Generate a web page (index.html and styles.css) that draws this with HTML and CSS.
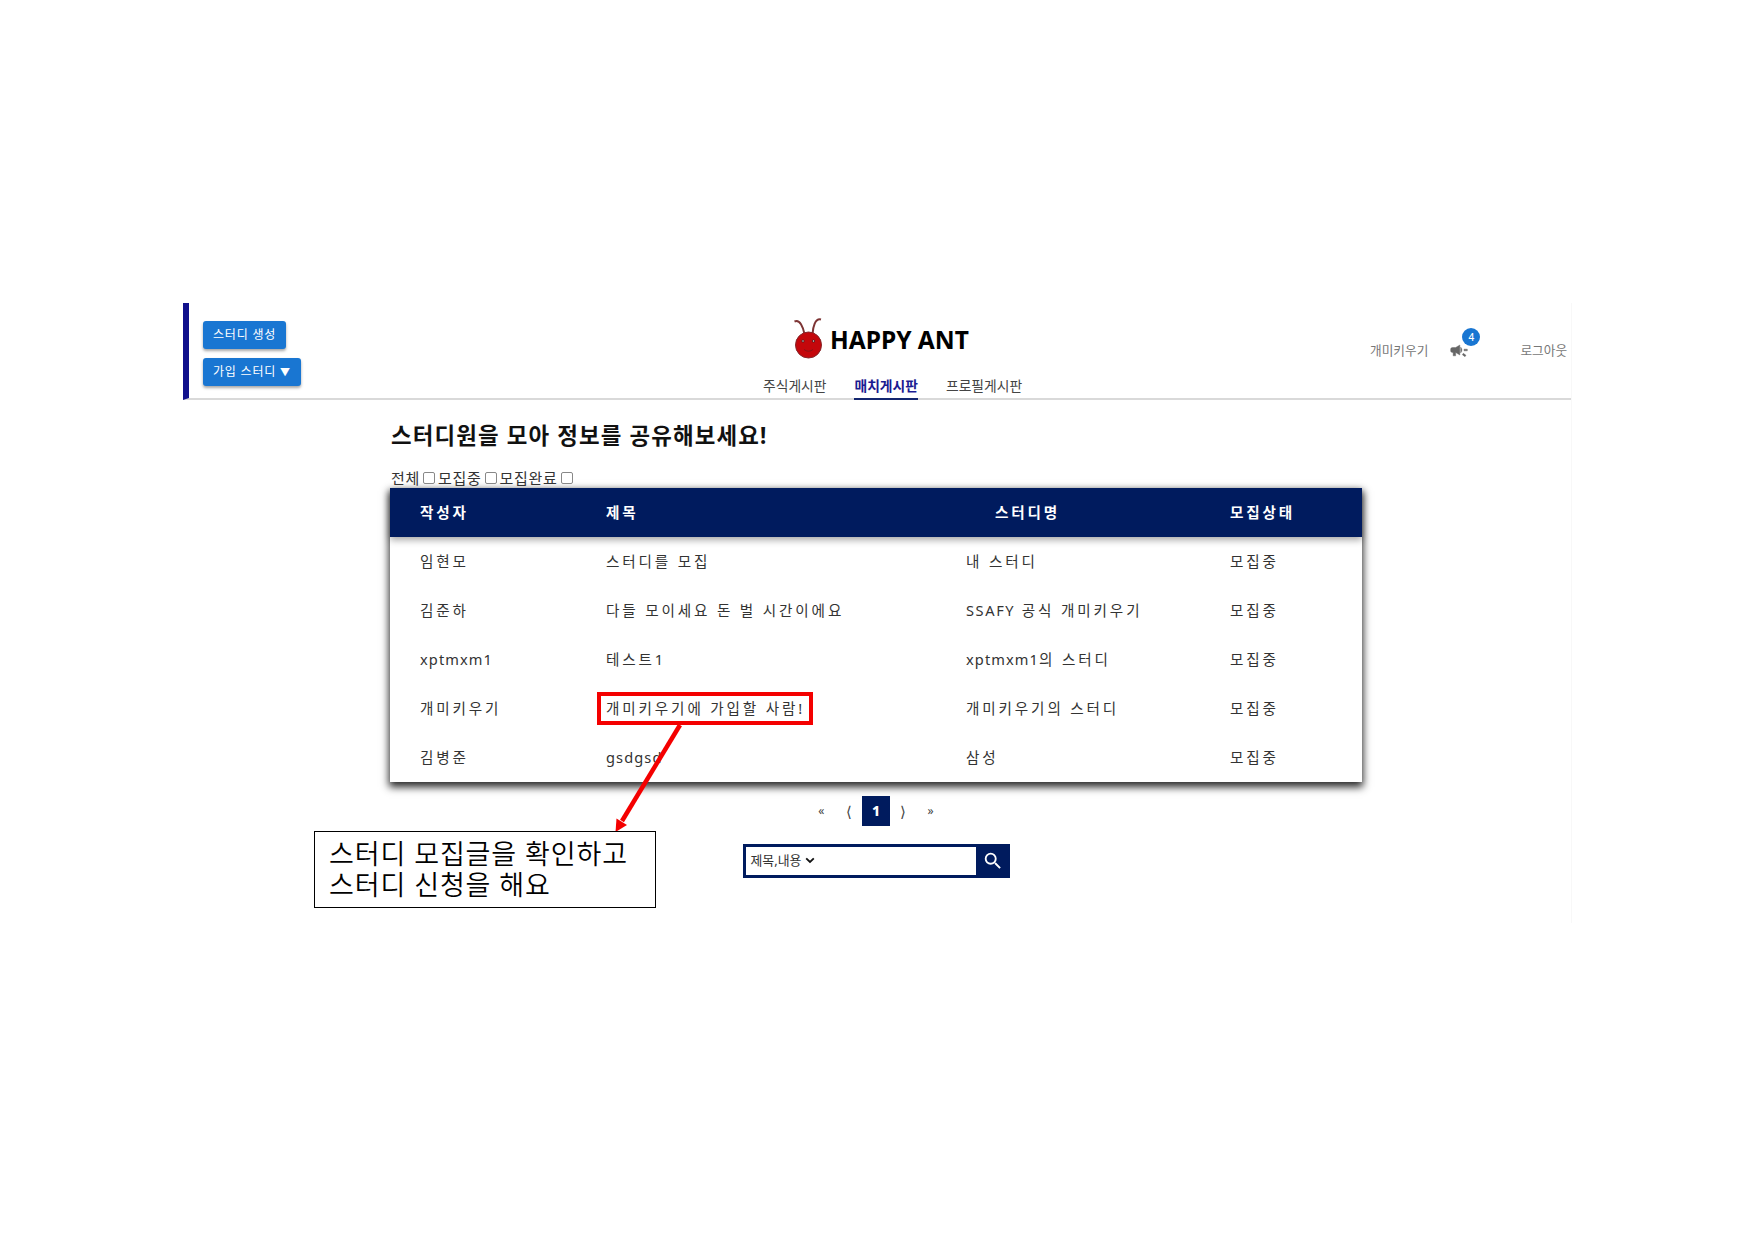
FILE: index.html
```
<!DOCTYPE html>
<html lang="ko">
<head>
<meta charset="utf-8">
<title>HAPPY ANT</title>
<link rel="stylesheet" href="styles.css">
</head>
<body>
<div class="app">
  <header class="header">
    <div class="study-actions">
      <button class="btn">스터디 생성</button>
      <button class="btn">가입 스터디 <span class="caret">▼</span></button>
    </div>
    <div class="brand">
      <div class="logo">
        <svg class="ant" width="32" height="44" viewBox="0 0 32 44" fill="none">
          <path d="M11.500 17C10 10 7 2 1.500 4.500M19.500 17C20 10 22 1 28 2.500" stroke="#7d3434" stroke-width="2"/>
          <circle cx="15.500" cy="28" r="13" fill="#c4070b" stroke="#84262a"/>
          <circle cx="10" cy="24" r="1.500" fill="#4c2020"/><circle cx="20.500" cy="24" r="1.500" fill="#4c2020"/>
          <circle cx="10" cy="24" r=".7" fill="#ddd"/><circle cx="20.500" cy="24" r=".7" fill="#ddd"/>
          <path d="M11 32.500Q15.500 36 20 32.500" stroke="#861417"/>
        </svg>
        <span class="brand-name">HAPPY ANT</span>
      </div>
      <nav class="nav">
        <a>주식게시판</a><a class="active">매치게시판</a><a>프로필게시판</a>
      </nav>
    </div>
    <div class="user">
      <span>개미키우기</span>
      <span class="notice">
        <svg width="20" height="20" viewBox="0 0 24 24" fill="#666"><path d="M18 11v2h4v-2h-4zm-2 6.610c.96.71 2.210 1.650 3.200 2.390.4-.53.8-1.070 1.200-1.600-.99-.74-2.240-1.680-3.200-2.400-.4.54-.8 1.080-1.200 1.610zM4 9c-1.100 0-2 .9-2 2v2c0 1.100.9 2 2 2h1v4h3v-4l5 3V6L8 9H4zm11.500 3c0-1.330-.58-2.530-1.500-3.350v6.690c.92-.81 1.500-2.010 1.500-3.340z" stroke="#666" stroke-width=".5"/></svg>
        <b class="badge">4</b>
      </span>
      <span>로그아웃</span>
    </div>
  </header>
  <main class="board">
    <h1>스터디원을 모아 정보를 공유해보세요!</h1>
    <div class="filters">
      <label>전체<input type="checkbox"></label><label>모집중<input type="checkbox"></label><label>모집완료<input type="checkbox"></label>
    </div>
    <div class="table">
      <div class="row head"><span>작성자</span><span>제목</span><span class="study">스터디명</span><span>모집상태</span></div>
      <div class="row"><span>임현모</span><span>스터디를 모집</span><span>내 스터디</span><span>모집중</span></div>
      <div class="row"><span>김준하</span><span>다들 모이세요 돈 벌 시간이에요</span><span><span class="caps">SSAFY</span> 공식 개미키우기</span><span>모집중</span></div>
      <div class="row"><span class="latin">xptmxm1</span><span>테스트1</span><span><span class="latin">xptmxm1</span>의 스터디</span><span>모집중</span></div>
      <div class="row"><span>개미키우기</span><span>개미키우기에 가입할 사람!</span><span>개미키우기의 스터디</span><span>모집중</span></div>
      <div class="row"><span>김병준</span><span class="latin">gsdgsd</span><span>삼성</span><span>모집중</span></div>
    </div>
    <div class="pages"><a>«</a><a class="angle">⟨</a><a class="current">1</a><a class="angle">⟩</a><a>»</a></div>
    <div class="search">
      <div class="field"><span>제목,내용</span>
        <svg width="10" height="7" viewBox="0 0 10 7" fill="none" stroke="#111" stroke-width="1.800"><path d="M1.200 1.300 5 5l3.800-3.700"/></svg>
      </div>
      <svg class="glass" width="22" height="22" viewBox="0 0 24 24" fill="#fff"><path d="M15.500 14h-.79l-.28-.27A6.470 6.470 0 0 0 16 9.500 6.500 6.500 0 1 0 9.500 16c1.610 0 3.090-.59 4.230-1.570l.27.28v.79l5 4.990L20.490 19l-4.990-5zm-6 0C7.010 14 5 11.990 5 9.500S7.010 5 9.500 5 14 7.010 14 9.500 11.990 14 9.500 14z"/></svg>
    </div>
  </main>
</div>
<div class="highlight"></div>
<svg class="arrow" width="100" height="120" viewBox="0 0 100 120"><path d="M80 5 22 101" stroke="#f40000" stroke-width="4.500"/><path d="M15.500 112 16.500 98.500 27 105Z" fill="#f40000"/></svg>
<div class="callout">스터디 모집글을 확인하고<br>스터디 신청을 해요</div>
</body>
</html>
```
FILE: styles.css
```
* { box-sizing: border-box; }
body {
  margin: 0;
  height: 1240px;
  padding: 303px 0 0 183px;
  background: #fff;
  position: relative;
  overflow: hidden;
  font-family: "Noto Sans", "Noto Sans CJK KR", sans-serif;
  color: #333;
}
.app { width: 1389px; height: 620px; border-right: 1px solid #f8f8f8; }
.header {
  display: grid;
  grid-template-columns: 566px 290px 1fr;
  height: 97px;
  border-left: 6px solid #10108c;
  border-bottom: 2px solid #d9d9d9;
}
.study-actions {
  display: flex;
  flex-direction: column;
  align-items: flex-start;
  gap: 9px;
  padding: 18px 0 0 14px;
}
.btn {
  height: 28px;
  padding: 0 10px;
  border: 0;
  border-radius: 3px;
  background: #1976d2;
  color: #fff;
  font: 400 12px/28px "Noto Sans", "Noto Sans CJK KR", sans-serif;
  letter-spacing: .8px;
  box-shadow: 0 2px 3px rgba(0, 0, 0, .35);
  white-space: nowrap;
}
.caret { font-size: 10px; }
.brand { display: flex; flex-direction: column; }
.logo { display: flex; align-items: center; height: 72px; padding-left: 38px; }
.brand-name {
  margin: 2px 0 0 5px;
  font: 700 24.500px/36px "Noto Sans", sans-serif;
  color: #000;
  white-space: nowrap;
}
.nav { display: flex; gap: 28px; padding-left: 8px; }
.nav a { height: 25px; font-size: 13.800px; line-height: 22px; color: #444; white-space: nowrap; }
.nav .active { height: 25px; border-bottom: 2px solid #13266f; font-weight: 700; color: #1b1b91; }
.user { display: flex; align-items: flex-start; padding: 37px 0 0 325px; font-size: 12.700px; line-height: 20px; color: #777; white-space: nowrap; }
.notice { position: relative; width: 20px; height: 20px; margin: 0 51px 0 21px; }
.notice svg { display: block; }
.badge {
  position: absolute;
  left: 13px;
  top: -12px;
  width: 18px;
  height: 18px;
  border-radius: 50%;
  background: #1976d2;
  color: #fff;
  font-size: 10px;
  font-weight: 500;
  line-height: 19px;
  text-align: center;
}
.board { width: 972px; margin-left: 207px; }
h1 { margin: 0; padding: 19px 0 0 1px; font-size: 22.400px; line-height: 34px; letter-spacing: 1.150px; color: #111; }
.filters { display: flex; gap: 3px; height: 35px; padding: 14px 0 0 1px; font-size: 15px; line-height: 20px; letter-spacing: .7px; }
.filters label { display: flex; align-items: center; gap: 3px; }
.filters input { appearance: none; width: 12px; height: 12px; margin: 0; border: 1px solid #888; border-radius: 2px; background: #fff; }
.table { height: 294px; background: #fff; box-shadow: 0 4px 8px 1px rgba(0, 0, 0, .85); font-size: 14.600px; letter-spacing: 2.850px; }
.row { display: grid; grid-template-columns: 186px 360px 264px 1fr; align-items: center; height: 49px; padding: 0 0 2px 30px; line-height: 22px; white-space: nowrap; }
.head { background: #001b5e; color: #fff; font-weight: 700; box-shadow: 0 3px 7px rgba(0, 0, 0, .35); }
.study { padding-left: 29px; }
.latin { letter-spacing: 1.100px; }
.caps { letter-spacing: 1.600px; }
.pages { display: flex; justify-content: center; margin-top: 14px; height: 30px; line-height: 30px; font-size: 12px; color: #444; }
.pages a { width: 27.300px; text-align: center; }
.pages .angle { font-size: 15px; }
.pages .current { background: #001b5e; color: #fff; font-weight: 800; font-size: 14px; }
.search { display: flex; align-items: center; width: 267px; height: 34px; margin: 18px auto 0; padding: 3px; background: #001b5e; }
.field { display: flex; align-items: center; gap: 4px; width: 230px; height: 28px; padding: 0 0 1px 5px; background: #fff; font-size: 12.900px; line-height: 20px; white-space: nowrap; }
.field span { margin-top: -1px; }
.glass { margin-left: 6px; }
.highlight { position: absolute; left: 597px; top: 692px; width: 216px; height: 33px; border: 4px solid #f40000; }
.arrow { position: absolute; left: 600px; top: 720px; }
.callout {
  position: absolute;
  left: 314px;
  top: 831px;
  width: 342px;
  height: 77px;
  padding: 6px 14px;
  border: 1.500px solid #000;
  background: #fff;
  color: #000;
  font: 350 27px/31px "Noto Sans", "Noto Sans CJK KR", sans-serif;
  letter-spacing: .9px;
  white-space: nowrap;
}
```
